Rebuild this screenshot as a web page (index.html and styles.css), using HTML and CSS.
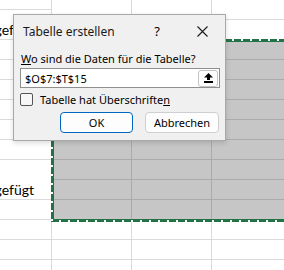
FILE: index.html
```html
<!DOCTYPE html>
<html lang="de">
<head>
    <meta charset="UTF-8">
    <title>Tabelle erstellen</title>
    <link rel="stylesheet" href="styles.css">
</head>
<body>
<div class="sheet">
    <div class="col first">
        <div class="cell h10"></div>
        <div class="cell h30 text"><span>eingefügt</span></div>
        <div class="cell"></div>
        <div class="cell"></div>
        <div class="cell"></div>
        <div class="cell"></div>
        <div class="cell"></div>
        <div class="cell"></div>
        <div class="cell h40 text"><span>eingefügt</span></div>
        <div class="cell"></div>
        <div class="cell"></div>
        <div class="cell"></div>
        <div class="cell"></div>
    </div>
    <div class="col">
        <div class="cell"></div>
        <div class="cell"></div>
        <div class="cell sel"></div>
        <div class="cell sel"></div>
        <div class="cell sel"></div>
        <div class="cell sel"></div>
        <div class="cell sel"></div>
        <div class="cell sel"></div>
        <div class="cell sel"></div>
        <div class="cell sel"></div>
        <div class="cell sel"></div>
        <div class="cell"></div>
        <div class="cell"></div>
        <div class="cell"></div>
    </div>
    <div class="col">
        <div class="cell"></div>
        <div class="cell"></div>
        <div class="cell sel"></div>
        <div class="cell sel"></div>
        <div class="cell sel"></div>
        <div class="cell sel"></div>
        <div class="cell sel"></div>
        <div class="cell sel"></div>
        <div class="cell sel"></div>
        <div class="cell sel"></div>
        <div class="cell sel"></div>
        <div class="cell"></div>
        <div class="cell"></div>
        <div class="cell"></div>
    </div>
    <div class="col">
        <div class="cell"></div>
        <div class="cell"></div>
        <div class="cell sel"></div>
        <div class="cell sel"></div>
        <div class="cell sel"></div>
        <div class="cell sel"></div>
        <div class="cell sel"></div>
        <div class="cell sel"></div>
        <div class="cell sel"></div>
        <div class="cell sel"></div>
        <div class="cell sel"></div>
        <div class="cell"></div>
        <div class="cell"></div>
        <div class="cell"></div>
    </div>

    <!-- Laufrahmen um den kopierten Bereich -->
    <svg class="marquee" width="240" height="184">
        <rect x="1.5" y="1.5" width="300" height="180" fill="none" stroke="#217346" stroke-width="3"/>
        <rect x="1" y="1" width="301" height="181" fill="none" stroke="#fff" stroke-width="2" stroke-dasharray="2 7"/>
    </svg>

    <div class="dialog">
        <div class="titlebar">
            <span class="title">Tabelle erstellen</span>
            <span class="help">?</span>
            <svg class="close" width="11" height="11" viewBox="0 0 11 11">
                <path d="M0.5 0.5 L10.5 10.5 M10.5 0.5 L0.5 10.5" stroke="#1a1a1a" stroke-width="1.1" fill="none"/>
            </svg>
        </div>
        <div class="content">
            <div class="prompt"><u>W</u>o sind die Daten für die Tabelle?</div>
            <div class="range">
                <span class="range-text">$O$7:$T$15</span>
                <button class="collapse">
                    <svg width="9" height="10" viewBox="0 0 9 10">
                        <polygon points="4.5,0 9,4.5 6,4.5 6,7 3,7 3,4.5 0,4.5" fill="#000"/>
                        <rect x="0" y="8" width="9" height="2" fill="#000"/>
                    </svg>
                </button>
            </div>
            <div class="check">
                <span class="box"></span>
                <span>Tabelle hat Überschrifte<u>n</u></span>
            </div>
            <div class="buttons">
                <button class="btn primary">OK</button>
                <button class="btn">Abbrechen</button>
            </div>
        </div>
    </div>
</div>
</body>
</html>
```

FILE: styles.css
```css
body {
    margin: 0;
    padding: 0;
    background: #fff;
    overflow: hidden;
}

.sheet {
    position: relative;
    display: flex;
    width: 284px;
    height: 270px;
    overflow: hidden;
    font-family: 'Lato', sans-serif;
    font-size: 14px;
}

.col {
    display: flex;
    flex-direction: column;
    flex: 0 0 80px;
}

.col.first {
    flex-basis: 52px;
}

.cell {
    box-sizing: border-box;
    height: 20px;
    flex: 0 0 auto;
    border-right: 1px solid #dadada;
    border-bottom: 1px solid #dadada;
}

.cell.h10 { height: 10px; }
.cell.h30 { height: 30px; }
.cell.h40 { height: 40px; }

.cell.sel {
    background: #c6c6c6;
    border-color: #ababab;
}

.cell.text {
    display: flex;
    align-items: flex-end;
    overflow: hidden;
    white-space: nowrap;
    color: #000;
    padding-bottom: 1px;
}

.cell.text span {
    margin-left: -24px;
}

.marquee {
    position: absolute;
    left: 51px;
    top: 39px;
}

/* Dialog */
.dialog {
    position: absolute;
    left: 13px;
    top: 14px;
    width: 213px;
    height: 127px;
    box-sizing: border-box;
    background: #f0f0f0;
    border: 1px solid #a8a8a8;
    box-shadow: 0 2px 5px rgba(0, 0, 0, 0.14);
    font-family: 'Noto Sans', sans-serif;
    font-size: 11px;
    color: #000;
}

.titlebar {
    display: flex;
    align-items: center;
    height: 32px;
    padding-left: 9px;
    font-size: 12px;
}

.title {
    flex: 1;
    color: #1a1a1a;
}

.help {
    font-size: 13px;
    margin-right: 37px;
}

.close {
    margin-right: 17px;
}

.content {
    padding: 4px 5px 0 6px;
}

.prompt {
    line-height: 15px;
    height: 15px;
    padding-left: 1px;
}

.range {
    display: flex;
    align-items: center;
    justify-content: space-between;
    box-sizing: border-box;
    width: 200px;
    height: 20px;
    margin-top: 2px;
    background: #fff;
    border: 1px solid #8f8f8f;
    padding: 0 1px 0 4px;
}

.collapse {
    display: flex;
    align-items: center;
    justify-content: center;
    width: 20px;
    height: 17px;
    padding: 0;
    background: #fdfdfd;
    border: 1px solid #c4c4c4;
    border-radius: 3px;
}

.check {
    display: flex;
    align-items: center;
    gap: 7px;
    margin-top: 5px;
    height: 13px;
}

.box {
    box-sizing: border-box;
    width: 13px;
    height: 13px;
    border: 1px solid #555;
    border-radius: 2px;
    background: #f7f7f7;
}

.buttons {
    display: flex;
    justify-content: flex-end;
    gap: 12px;
    margin-top: 6px;
    padding-right: 1px;
}

.btn {
    box-sizing: border-box;
    width: 74px;
    height: 21px;
    padding: 0;
    font-family: 'Noto Sans', sans-serif;
    font-size: 11px;
    color: #000;
    background: #fdfdfd;
    border: 1px solid #cfcfcf;
    border-radius: 4px;
}

.btn.primary {
    width: 73px;
    border: 1.5px solid #0067c0;
}
```
